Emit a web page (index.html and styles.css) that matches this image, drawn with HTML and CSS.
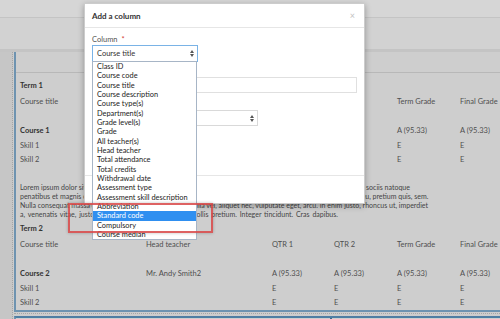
FILE: index.html
```html
<!DOCTYPE html>
<html lang="en">
<head>
    <meta charset="UTF-8">
    <meta name="viewport" content="width=device-width, initial-scale=1.0">
    <title>Report card - Add a column</title>
    <link rel="stylesheet" href="styles.css">
</head>
<body>
    <div class="page">
        <div class="topbar"></div>
        <div class="subbar"></div>
        <div class="main">
            <div class="gutter"></div>
            <div class="content">
                <div class="card">
                    <div class="card-head"></div>
                    <div class="card-body">
                        <section class="term">
                            <h3 class="term-title">Term 1</h3>
                            <div class="grid grid-head">
                                <span>Course title</span><span>Head teacher</span><span>QTR 1</span><span>QTR 2</span><span>Term Grade</span><span>Final Grade</span>
                            </div>
                            <div class="grid grid-course">
                                <span>Course 1</span><span>Mr. Andy Smith</span><span>A (95.33)</span><span>A (95.33)</span><span>A (95.33)</span><span>A (95.33)</span>
                            </div>
                            <div class="grid">
                                <span>Skill 1</span><span></span><span>E</span><span>E</span><span>E</span><span>E</span>
                            </div>
                            <div class="grid">
                                <span>Skill 2</span><span></span><span>E</span><span>E</span><span>E</span><span>E</span>
                            </div>
                        </section>
                        <p class="lorem">
                            Lorem ipsum dolor sit amet, consectetuer adipiscing elit. Aenean commodo ligula eget dolor. Aenean massa. Cum sociis natoque<br>
                            penatibus et magnis dis parturient montes, nascetur ridiculus mus. Donec quam felis, ultricies nec, pellentesque eu, pretium quis, sem.<br>
                            Nulla consequat massa quis enim. Donec pede justo, fringilla vel, aliquet nec, vulputate eget, arcu. In enim justo, rhoncus ut, imperdiet<br>
                            <span class="lorem-last">a, venenatis vitae, justo. Nullam dictum felis eu pede mollis pretium. Integer tincidunt. Cras dapibus.</span>
                        </p>
                        <section class="term">
                            <h3 class="term-title">Term 2</h3>
                            <div class="grid grid-head">
                                <span>Course title</span><span>Head teacher</span><span>QTR 1</span><span>QTR 2</span><span>Term Grade</span><span>Final Grade</span>
                            </div>
                            <div class="grid grid-course">
                                <span>Course 2</span><span>Mr. Andy Smith2</span><span>A (95.33)</span><span>A (95.33)</span><span>A (95.33)</span><span>A (95.33)</span>
                            </div>
                            <div class="grid">
                                <span>Skill 1</span><span></span><span>E</span><span>E</span><span>E</span><span>E</span>
                            </div>
                            <div class="grid">
                                <span>Skill 2</span><span></span><span>E</span><span>E</span><span>E</span><span>E</span>
                            </div>
                        </section>
                    </div>
                </div>
                <div class="sep"></div>
                <div class="card card-next">
                    <div class="next-left"></div>
                    <div class="next-right"></div>
                </div>
            </div>
        </div>
    </div>

    <div class="modal">
        <div class="modal-header">
            <span class="modal-title">Add a column</span>
            <span class="close">&times;</span>
        </div>
        <div class="modal-body">
            <div class="field">
                <label class="label">Column <span class="req">*</span></label>
                <div class="select select-focus">
                    <span>Course title</span>
                    <svg class="arrows" width="4" height="7" viewBox="0 0 4 7"><polygon points="0,3 2,0 4,3"/><polygon points="0,4 2,7 4,4"/></svg>
                </div>
            </div>
            <div class="field field-gap">
                <label class="label">Column title</label>
                <div class="input"></div>
            </div>
            <div class="field field-gap-lg">
                <label class="label">Position</label>
                <div class="select select-short">
                    <span>After</span>
                    <svg class="arrows" width="4" height="7" viewBox="0 0 4 7"><polygon points="0,3 2,0 4,3"/><polygon points="0,4 2,7 4,4"/></svg>
                </div>
            </div>
        </div>
        <div class="modal-footer"></div>
    </div>

    <ul class="listbox">
        <li>Class ID</li>
        <li>Course code</li>
        <li>Course title</li>
        <li>Course description</li>
        <li>Course type(s)</li>
        <li>Department(s)</li>
        <li>Grade level(s)</li>
        <li>Grade</li>
        <li>All teacher(s)</li>
        <li>Head teacher</li>
        <li>Total attendance</li>
        <li>Total credits</li>
        <li>Withdrawal date</li>
        <li>Assessment type</li>
        <li>Assessment skill description</li>
        <li>Abbreviation</li>
        <li class="selected">Standard code</li>
        <li>Compulsory</li>
        <li>Course median</li>
    </ul>

    <div class="callout"></div>
</body>
</html>
```

FILE: styles.css
```css
body {
    margin: 0;
    width: 500px;
    height: 319px;
    overflow: hidden;
    position: relative;
    font-family: Lato, "Open Sans", sans-serif;
    font-size: 7.5px;
    color: #4f4f4f;
    background: #cdcdcd;
}
.topbar {
    height: 17px;
    background: #d6d6d6;
    border-bottom: 1px solid #c4c4c4;
}
.subbar {
    height: 31px;
    background: #d2d2d2;
    border-bottom: 3px solid #c4c4c4;
}
.main {
    display: flex;
}
.gutter {
    width: 12px;
    flex: none;
    background: #c6c6c6;
    border-right: 1px dotted #a6a6a6;
}
.content {
    flex: 1;
    min-width: 0;
    margin-left: 1px;
}
.card {
    background: #cecece;
    border-left: 2px solid #6e93b0;
    border-bottom: 2px solid #6e93b0;
}
.card-head {
    height: 20px;
    border-bottom: 1px solid #b8b8b8;
}
.card-body {
    padding: 6px 0 0 4px;
}
.term-title {
    margin: 0 0 1.5px;
    font-size: 7.5px;
    line-height: 14px;
    font-weight: bold;
    color: #333;
}
.grid {
    display: grid;
    grid-template-columns: 126px 126px 62px 63px 63px 63px;
    line-height: 14px;
    white-space: nowrap;
}
.grid-head {
    margin-bottom: 15.5px;
}
.grid-course {
    margin-bottom: 1px;
}
.grid-course span:first-child {
    font-weight: bold;
    color: #333;
}
.lorem {
    margin: 15.5px 0 3.5px;
    font-size: 7px;
    line-height: 9px;
    white-space: nowrap;
    color: #444;
}
.lorem-last {
    word-spacing: 1px;
}
.sep {
    margin-top: 1px;
    border-top: 1px dotted #a6a6a6;
    height: 2px;
}
.card-next {
    display: flex;
    height: 1px;
    border-top: 2px solid #4f7ea3;
    border-bottom: none;
}
.next-left {
    width: 314px;
    border-right: 2px solid #3d6b8f;
}

/* modal */
.modal {
    position: absolute;
    left: 84px;
    top: 3px;
    width: 279px;
    height: 199px;
    background: #fff;
    border: 1px solid rgba(0, 0, 0, 0.2);
    box-shadow: 0 2px 6px rgba(0, 0, 0, 0.3);
}
.modal-header {
    height: 23px;
    padding: 0 9px 0 7px;
    display: flex;
    align-items: center;
    justify-content: space-between;
    border-bottom: 1px solid #e6e6e6;
}
.modal-title {
    font-size: 8px;
    font-weight: bold;
    color: #333;
}
.close {
    font-size: 9px;
    color: #c2c2c2;
}
.modal-body {
    height: 147px;
    padding: 7px 7px 0;
    box-sizing: border-box;
}
.label {
    display: block;
    height: 10px;
    line-height: 10px;
    color: #555;
}
.req {
    color: #d43f3a;
    margin-left: 2px;
}
.field-gap {
    margin-top: 4px;
}
.field-gap-lg {
    margin-top: 7px;
}
.select {
    box-sizing: border-box;
    height: 17px;
    width: 106px;
    display: flex;
    align-items: center;
    justify-content: space-between;
    padding: 0 3px 0 4px;
    border: 1px solid #d9d9d9;
    color: #333;
}
.select-focus {
    border-color: #7ab3e6;
}
.select-short {
    width: 166px;
    height: 16px;
}
.arrows {
    fill: #555;
}
.input {
    box-sizing: border-box;
    height: 16px;
    margin-top: 1px;
    border: 1px solid #e0e0e0;
}
.modal-footer {
    height: 27px;
    border-top: 1px solid #e6e6e6;
}

/* open dropdown */
.listbox {
    position: absolute;
    left: 92px;
    top: 61px;
    width: 103px;
    height: 177px;
    margin: 0;
    padding: 0;
    list-style: none;
    overflow: hidden;
    background: #fff;
    border: 1px solid #a7b5c6;
    font-size: 7.4px;
    color: #222;
}
.listbox li {
    height: 9.33px;
    line-height: 9.33px;
    padding-left: 4px;
    white-space: nowrap;
}
.listbox .selected {
    background: #2f8ff0;
    color: #fff;
}

.callout {
    position: absolute;
    left: 68px;
    top: 203px;
    width: 141px;
    height: 26px;
    border: 2px solid rgba(216, 70, 70, 0.85);
    box-shadow: 0 0 3px rgba(0, 0, 0, 0.25);
}
```
